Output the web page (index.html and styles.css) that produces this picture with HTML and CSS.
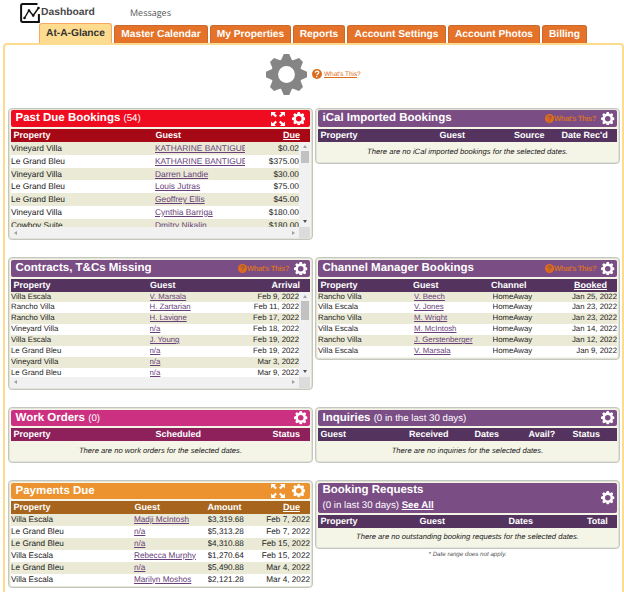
FILE: index.html
```html
<!DOCTYPE html>
<html lang="en">
<head>
<meta charset="utf-8">
<title>Dashboard</title>
<link rel="stylesheet" href="styles.css">
</head>
<body>
<svg class="defs" width="0" height="0">
  <symbol id="gear" viewBox="-20 -20 40 40">
    <circle r="11.500" fill="none" class="ring"/>
    <g id="pair"><path id="tooth" d="M-5.800-13-2.700-20H2.700L5.800-13Z"/><use href="#tooth" transform="rotate(45)"/></g>
    <use href="#pair" transform="rotate(90)"/><use href="#pair" transform="rotate(180)"/><use href="#pair" transform="rotate(270)"/>
  </symbol>
  <symbol id="expand" viewBox="0 0 14 14">
    <path d="M0 0h5L3.600 1.400 6 3.800 4.400 5.200 1.700 2.700 0 4.500ZM14 0v4.500L12.300 2.700 9.600 5.200 8 3.800 10.400 1.400 9 0ZM0 14V9.500l1.700 1.800L4.400 8.800 6 10.200 3.600 12.600 5 14ZM14 14H9l1.400-1.400L8 10.200l1.600-1.400 2.700 2.500L14 9.500Z"/>
  </symbol>
  <symbol id="help" viewBox="0 0 10 10">
    <circle cx="5" cy="5" r="5"/>
    <path class="mark" d="M3.300 3.800C3.400 1.700 6.900 1.700 6.800 3.600 6.700 4.700 5 4.800 4.900 6.100M4.700 7.100V8.200"/>
  </symbol>
</svg>

<header class="top">
  <svg class="logo" viewBox="0 0 20 20"><path d="M17.500 1.100H2.800Q1.100 1.100 1.100 2.800V17.200Q1.100 18.900 2.800 18.900H18.900V11" fill="none" stroke="#111" stroke-width="2"/><path d="M4.500 15 9 7.500 13.200 12.500 18.500 5" fill="none" stroke="#111" stroke-width="1.400"/><g fill="#111"><circle cx="4.500" cy="15" r="1.300"/><circle cx="9" cy="7.500" r="1.300"/><circle cx="13.200" cy="12.500" r="1.300"/><circle cx="18.500" cy="5" r="1.300"/></g></svg>
  <span class="current">Dashboard</span>
  <span class="messages">Messages</span>
</header>
<nav class="tabs">
  <a class="tab active">At-A-Glance</a><a class="tab t2">Master Calendar</a><a class="tab t3">My Properties</a><a class="tab t4">Reports</a><a class="tab t5">Account Settings</a><a class="tab t6">Account Photos</a><a class="tab t7">Billing</a>
</nav>

<main class="page">
  <div class="config">
    <svg class="biggear"><use href="#gear"/></svg>
    <svg class="help"><use href="#help"/></svg>
    <span class="what"><u>What's This</u>?</span>
  </div>

  <div class="grid">
    <section class="panel past">
      <div class="title"><h2>Past Due Bookings <small>(54)</small></h2><svg class="expand"><use href="#expand"/></svg><svg class="gear in"><use href="#gear"/></svg></div>
      <div class="cols"><b>Property</b><b>Guest</b><b class="end"><u>Due</u></b></div>
      <div class="scroll">
        <div class="rows">
          <div class="row"><span>Vineyard Villa</span><a>KATHARINE BANTIGUE</a><span>$0.02</span></div>
          <div class="row"><span>Le Grand Bleu</span><a>KATHARINE BANTIGUE</a><span>$375.00</span></div>
          <div class="row"><span>Vineyard Villa</span><a>Darren Landie</a><span>$30.00</span></div>
          <div class="row"><span>Le Grand Bleu</span><a>Louis Jutras</a><span>$75.00</span></div>
          <div class="row"><span>Le Grand Bleu</span><a>Geoffrey Ellis</a><span>$45.00</span></div>
          <div class="row"><span>Vineyard Villa</span><a>Cynthia Barriga</a><span>$180.00</span></div>
          <div class="row"><span>Cowboy Suite</span><a>Dmitry Nikalin</a><span>$180.00</span></div>
        </div>
        <div class="vbar"><i class="up"></i><i class="thumb"></i><i class="down"></i></div>
      </div>
      <div class="hbar"><i class="left"></i><i class="right"></i><i class="corner"></i></div>
    </section>

    <section class="panel ical">
      <div class="title"><h2>iCal Imported Bookings</h2><svg class="help"><use href="#help"/></svg><span class="hint">What's This?</span><svg class="gear"><use href="#gear"/></svg></div>
      <div class="cols"><b>Property</b><b>Guest</b><b>Source</b><b>Date Rec'd</b></div>
      <p class="empty">There are no iCal imported bookings for the selected dates.</p>
    </section>

    <section class="panel contracts">
      <div class="title"><h2>Contracts, T&amp;Cs Missing</h2><svg class="help"><use href="#help"/></svg><span class="hint">What's This?</span><svg class="gear"><use href="#gear"/></svg></div>
      <div class="cols"><b>Property</b><b>Guest</b><b class="end">Arrival</b></div>
      <div class="scroll">
        <div class="rows">
          <div class="row"><span>Villa Escala</span><a>V. Marsala</a><span>Feb 9, 2022</span></div>
          <div class="row"><span>Rancho Villa</span><a>H. Zartarian</a><span>Feb 11, 2022</span></div>
          <div class="row"><span>Rancho Villa</span><a>H. Lavigne</a><span>Feb 17, 2022</span></div>
          <div class="row"><span>Vineyard Villa</span><a>n/a</a><span>Feb 18, 2022</span></div>
          <div class="row"><span>Villa Escala</span><a>J. Young</a><span>Feb 19, 2022</span></div>
          <div class="row"><span>Le Grand Bleu</span><a>n/a</a><span>Feb 19, 2022</span></div>
          <div class="row"><span>Vineyard Villa</span><a>n/a</a><span>Mar 3, 2022</span></div>
          <div class="row"><span>Le Grand Bleu</span><a>n/a</a><span>Mar 9, 2022</span></div>
        </div>
        <div class="vbar"><i class="up"></i><i class="thumb tall"></i><i class="down"></i></div>
      </div>
      <div class="hbar"><i class="left"></i><i class="right"></i><i class="corner"></i></div>
    </section>

    <section class="panel channel">
      <div class="title"><h2>Channel Manager Bookings</h2><svg class="help"><use href="#help"/></svg><span class="hint">What's This?</span><svg class="gear"><use href="#gear"/></svg></div>
      <div class="cols"><b>Property</b><b>Guest</b><b>Channel</b><b class="end"><u>Booked</u></b></div>
      <div class="rows">
        <div class="row"><span>Rancho Villa</span><a>V. Beech</a><span>HomeAway</span><span>Jan 25, 2022</span></div>
        <div class="row"><span>Villa Escala</span><a>V. Jones</a><span>HomeAway</span><span>Jan 23, 2022</span></div>
        <div class="row"><span>Rancho Villa</span><a>M. Wright</a><span>HomeAway</span><span>Jan 23, 2022</span></div>
        <div class="row"><span>Villa Escala</span><a>M. McIntosh</a><span>HomeAway</span><span>Jan 14, 2022</span></div>
        <div class="row"><span>Rancho Villa</span><a>J. Gerstenberger</a><span>HomeAway</span><span>Jan 12, 2022</span></div>
        <div class="row"><span>Villa Escala</span><a>V. Marsala</a><span>HomeAway</span><span>Jan 9, 2022</span></div>
      </div>
    </section>

    <section class="panel work">
      <div class="title"><h2>Work Orders <small>(0)</small></h2><svg class="gear"><use href="#gear"/></svg></div>
      <div class="cols"><b>Property</b><b>Scheduled</b><b class="end">Status</b></div>
      <p class="empty">There are no work orders for the selected dates.</p>
    </section>

    <section class="panel inquiries">
      <div class="title"><h2>Inquiries <small>(0 in the last 30 days)</small></h2><svg class="gear"><use href="#gear"/></svg></div>
      <div class="cols"><b>Guest</b><b>Received</b><b>Dates</b><b>Avail?</b><b>Status</b></div>
      <p class="empty">There are no inquiries for the selected dates.</p>
    </section>

    <section class="panel payments">
      <div class="title"><h2>Payments Due</h2><svg class="expand"><use href="#expand"/></svg><svg class="gear in"><use href="#gear"/></svg></div>
      <div class="cols"><b>Property</b><b>Guest</b><b>Amount</b><b class="end"><u>Due</u></b></div>
      <div class="rows">
        <div class="row"><span>Villa Escala</span><a>Madji McIntosh</a><span>$3,319.68</span><span>Feb 7, 2022</span></div>
        <div class="row"><span>Le Grand Bleu</span><a>n/a</a><span>$5,313.28</span><span>Feb 7, 2022</span></div>
        <div class="row"><span>Le Grand Bleu</span><a>n/a</a><span>$4,310.88</span><span>Feb 15, 2022</span></div>
        <div class="row"><span>Villa Escala</span><a>Rebecca Murphy</a><span>$1,270.64</span><span>Feb 15, 2022</span></div>
        <div class="row"><span>Le Grand Bleu</span><a>n/a</a><span>$5,490.88</span><span>Mar 4, 2022</span></div>
        <div class="row"><span>Villa Escala</span><a>Marilyn Moshos</a><span>$2,121.28</span><span>Mar 4, 2022</span></div>
      </div>
    </section>

    <div class="stack">
      <section class="panel requests">
        <div class="title"><h2>Booking Requests<br><small>(0 in last 30 days) <u>See All</u></small></h2><svg class="gear"><use href="#gear"/></svg></div>
        <div class="cols"><b>Property</b><b>Guest</b><b>Dates</b><b>Total</b></div>
        <p class="empty">There are no outstanding booking requests for the selected dates.</p>
      </section>
      <p class="note">* Date range does not apply.</p>
    </div>
  </div>
</main>
</body>
</html>
```
FILE: styles.css
```css
* { box-sizing: border-box; }
html { height: 592px; overflow: hidden; }
body {
  margin: 0;
  height: 592px;
  overflow: hidden;
  background: #fff;
  color: #222;
  font-family: "Liberation Sans", Arial, sans-serif;
  font-size: 8px;
  text-rendering: geometricPrecision;
}
.defs { display: block; width: 0; height: 0; }
svg { display: block; flex: none; fill: #fff; }
u { text-underline-offset: 1px; }
.ring { stroke: #fff; stroke-width: 6.600; }
.biggear { --ring: #858585; }

.top { display: flex; height: 23px; padding: 3px 0 0 20px; }
.logo { width: 20px; height: 20px; }
.current { width: 90px; padding-left: 1px; font-size: 10.3px; font-weight: bold; line-height: 19px; color: #484848; }
.messages { font-family: "Open Sans", "Noto Sans", sans-serif; font-size: 9px; line-height: 20px; color: #555; }

.tabs { display: flex; align-items: flex-end; height: 20px; padding-left: 39px; gap: 2px; }
.tab {
  height: 18px;
  border: 1px solid #c86a2c;
  border-bottom: 0;
  border-radius: 3px 3px 0 0;
  background: #e47329;
  color: #fff;
  font-size: 10.2px;
  font-weight: bold;
  line-height: 17px;
  text-align: center;
  white-space: nowrap;
}
.active { width: 73px; height: 20px; line-height: 19px; border-color: #f5a965; background: #fddc90; color: #333; }
.t2 { width: 94px; }
.t3 { width: 81px; }
.t4 { width: 52px; }
.t5 { width: 99px; }
.t6 { width: 92px; }
.t7 { width: 45px; }

.page {
  height: 560px;
  margin-left: 3px;
  border: 2px solid #fddc90;
  border-radius: 4px 4px 0 0;
}
.config { display: flex; align-items: center; height: 63px; padding: 0 0 5px 261px; }
.biggear { width: 41px; height: 41px; fill: #858585; }
.ring { stroke: var(--ring, #fff); }
.help { width: 10px; height: 10px; fill: #dc6b20; }
.help + .hint { margin-right: 5px; }
.config .help { margin-left: 5px; }
.mark { fill: none; stroke: var(--mark, #fff); stroke-width: 1.3; }
.what { margin-left: 2px; font-size: 6.5px; letter-spacing: -0.05px; color: #dc6b20; }

.grid {
  display: grid;
  grid-template-columns: 305px 305px;
  grid-template-rows: 149px 150px 73px auto;
  column-gap: 2px;
  align-items: start;
  padding-left: 3px;
}
.panel {
  --size: 8.4px;
  --line: 12.75px;
  padding: 2px 2px 1px;
  border: 1px solid #c4c7c0;
  border-radius: 4px;
  background: #f5f5e7;
  box-shadow: inset 0 0 0 1px #e2e4d8;
}
.title {
  display: flex;
  align-items: center;
  height: 16px;
  margin-bottom: 2px;
  padding: 0 2.500px 0 4.500px;
  border-radius: 2px;
  background: #7a4d85;
  color: #fff;
}
h2 { flex: 1; margin: 0; font-size: 11.5px; line-height: 15px; white-space: nowrap; }
small { font-size: 9.7px; font-weight: normal; }
small u { font-weight: bold; }
.title .gear { width: 13.500px; height: 13.500px; }
.title .gear.in { margin: 0 2.500px 0 6.500px; }
.expand { width: 14px; height: 14px; }
.title .help { --mark: #93583f; width: 9px; height: 9px; }
.hint { font-size: 7.6px; font-weight: bold; letter-spacing: -0.42px; color: #d26f2c; }

.cols {
  display: grid;
  height: 13px;
  padding: 0 10px 0 2.500px;
  background: #54345f;
  color: #fff;
  font-size: 9px;
  line-height: 13px;
  white-space: nowrap;
}
.end { justify-self: end; }
.row {
  display: grid;
  height: var(--line);
  font-size: var(--size);
  line-height: var(--line);
  white-space: nowrap;
  background: #fff;
}
.row:nth-child(odd) { background: #eaead6; }
.row > * { overflow: hidden; }
.row > :last-child { text-align: right; }
.row a { color: #69417a; text-decoration: underline; text-underline-offset: 1px; }
.empty { height: 20px; margin: 0; font-size: 7.65px; font-style: italic; line-height: 19px; text-align: center; }

.scroll { display: flex; height: 85px; overflow: hidden; }
.scroll .rows { width: 288px; }
.vbar { display: flex; flex-direction: column; align-items: center; flex: 1; background: #f1f1f1; }
.thumb { width: 8px; height: 12px; margin-top: 3px; background: #c1c1c1; }
.thumb.tall { height: 19px; }
.up, .down, .left, .right { border: 2px solid transparent; }
.up { margin-top: 3px; border-top: 0; border-bottom: 3px solid #a0a0a0; }
.down { margin: auto 0 4px; border-bottom: 0; border-top: 3px solid #505050; }
.hbar { display: flex; align-items: center; height: 11px; padding-left: 3px; background: #f1f1f1; }
.left { border-left: 0; border-right: 3px solid #a0a0a0; }
.right { margin-left: auto; margin-right: 4px; border-right: 0; border-left: 3px solid #a0a0a0; }
.corner { width: 11px; height: 11px; background: #dcdcdc; }

.past, .ical { padding-top: 1px; }
.past .title, .ical .title { height: 17px; }
.past .title { background: #ef0b20; }
.past .cols { background: #a70815; grid-template-columns: 142px 1fr auto; }
.past .row { grid-template-columns: 144px 90px 1fr; }
.ical .cols { grid-template-columns: 119px 74.500px 47.500px auto; }
.contracts, .channel { --size: 7.8px; --line: 10.900px; }
.contracts .title, .channel .title { height: 17px; }
.contracts .cols, .channel .cols, .payments .cols { height: 12.500px; }
.contracts .cols { grid-template-columns: 136.500px 1fr auto; }
.contracts .row { grid-template-columns: 138.500px 1fr 70px; }
.channel .cols { grid-template-columns: 92.500px 78px 1fr auto; }
.channel .row { grid-template-columns: 96px 78.500px 1fr 60px; }
.channel { padding-bottom: 2px; }
.work .title { background: #cc3181; }
.work .cols { background: #8e205c; grid-template-columns: 142px 1fr auto; }
.inquiries .cols { grid-template-columns: 88.500px 65.500px 54px 44px auto; }
.payments { --size: 8.2px; --line: 12px; }
.payments .title { background: #ec932f; }
.payments .cols { background: #a6641c; grid-template-columns: 121px 73px 1fr auto; }
.payments .row { grid-template-columns: 123px 73.500px 1fr 60px; }
.requests .title { height: 30px; }
.requests .cols { grid-template-columns: 99px 89px 78.500px auto; }
.requests .empty { height: 19px; line-height: 17px; }
.note { margin: 2px 0 0; font-size: 6.2px; font-style: italic; line-height: 8px; text-align: center; color: #555; }
```
